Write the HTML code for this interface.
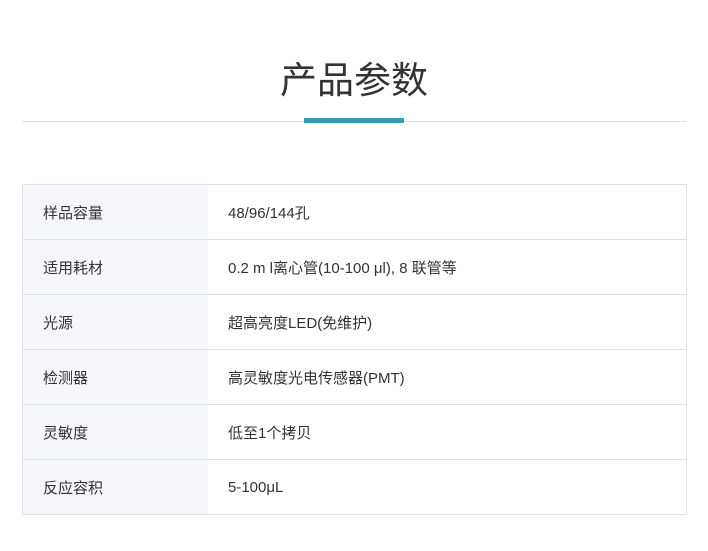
<!DOCTYPE html>
<html><head><meta charset="utf-8"><style>
body{margin:0;width:708px;height:551px;background:#fff;font-family:"Liberation Sans","Noto Sans CJK SC",sans-serif;color:#333;position:relative;overflow:hidden}
h1{position:absolute;top:52px;left:0;width:708px;text-align:center;margin:0;font-weight:normal;font-size:37px;line-height:50px;color:#333;font-family:"Noto Sans CJK SC",sans-serif}
.line{position:absolute;left:22px;width:664px;top:121px;height:1px;background:#dde3ea}
.bar{position:absolute;left:304px;width:100px;top:118px;height:5px;background:#339ab2}
table{position:absolute;left:22px;top:184px;width:665px;border-collapse:collapse;font-size:15px;font-family:"Liberation Sans","Noto Sans CJK SC",sans-serif}
td{border:1px solid #dde2ea;height:54px;padding:0;color:#333}
td.k{width:165px;background:#f5f6fa;padding-left:20px;border-right:none}
td.v{padding-left:20px;border-left:none}
</style></head><body>
<h1>产品参数</h1>
<div class="line"></div><div class="bar"></div>
<table>
<tr><td class="k">样品容量</td><td class="v">48/96/144孔</td></tr>
<tr><td class="k">适用耗材</td><td class="v">0.2 m l离心管(10-100 μl), 8 联管等</td></tr>
<tr><td class="k">光源</td><td class="v">超高亮度LED(免维护)</td></tr>
<tr><td class="k">检测器</td><td class="v">高灵敏度光电传感器(PMT)</td></tr>
<tr><td class="k">灵敏度</td><td class="v">低至1个拷贝</td></tr>
<tr><td class="k">反应容积</td><td class="v">5-100μL</td></tr>
</table>
</body></html>
